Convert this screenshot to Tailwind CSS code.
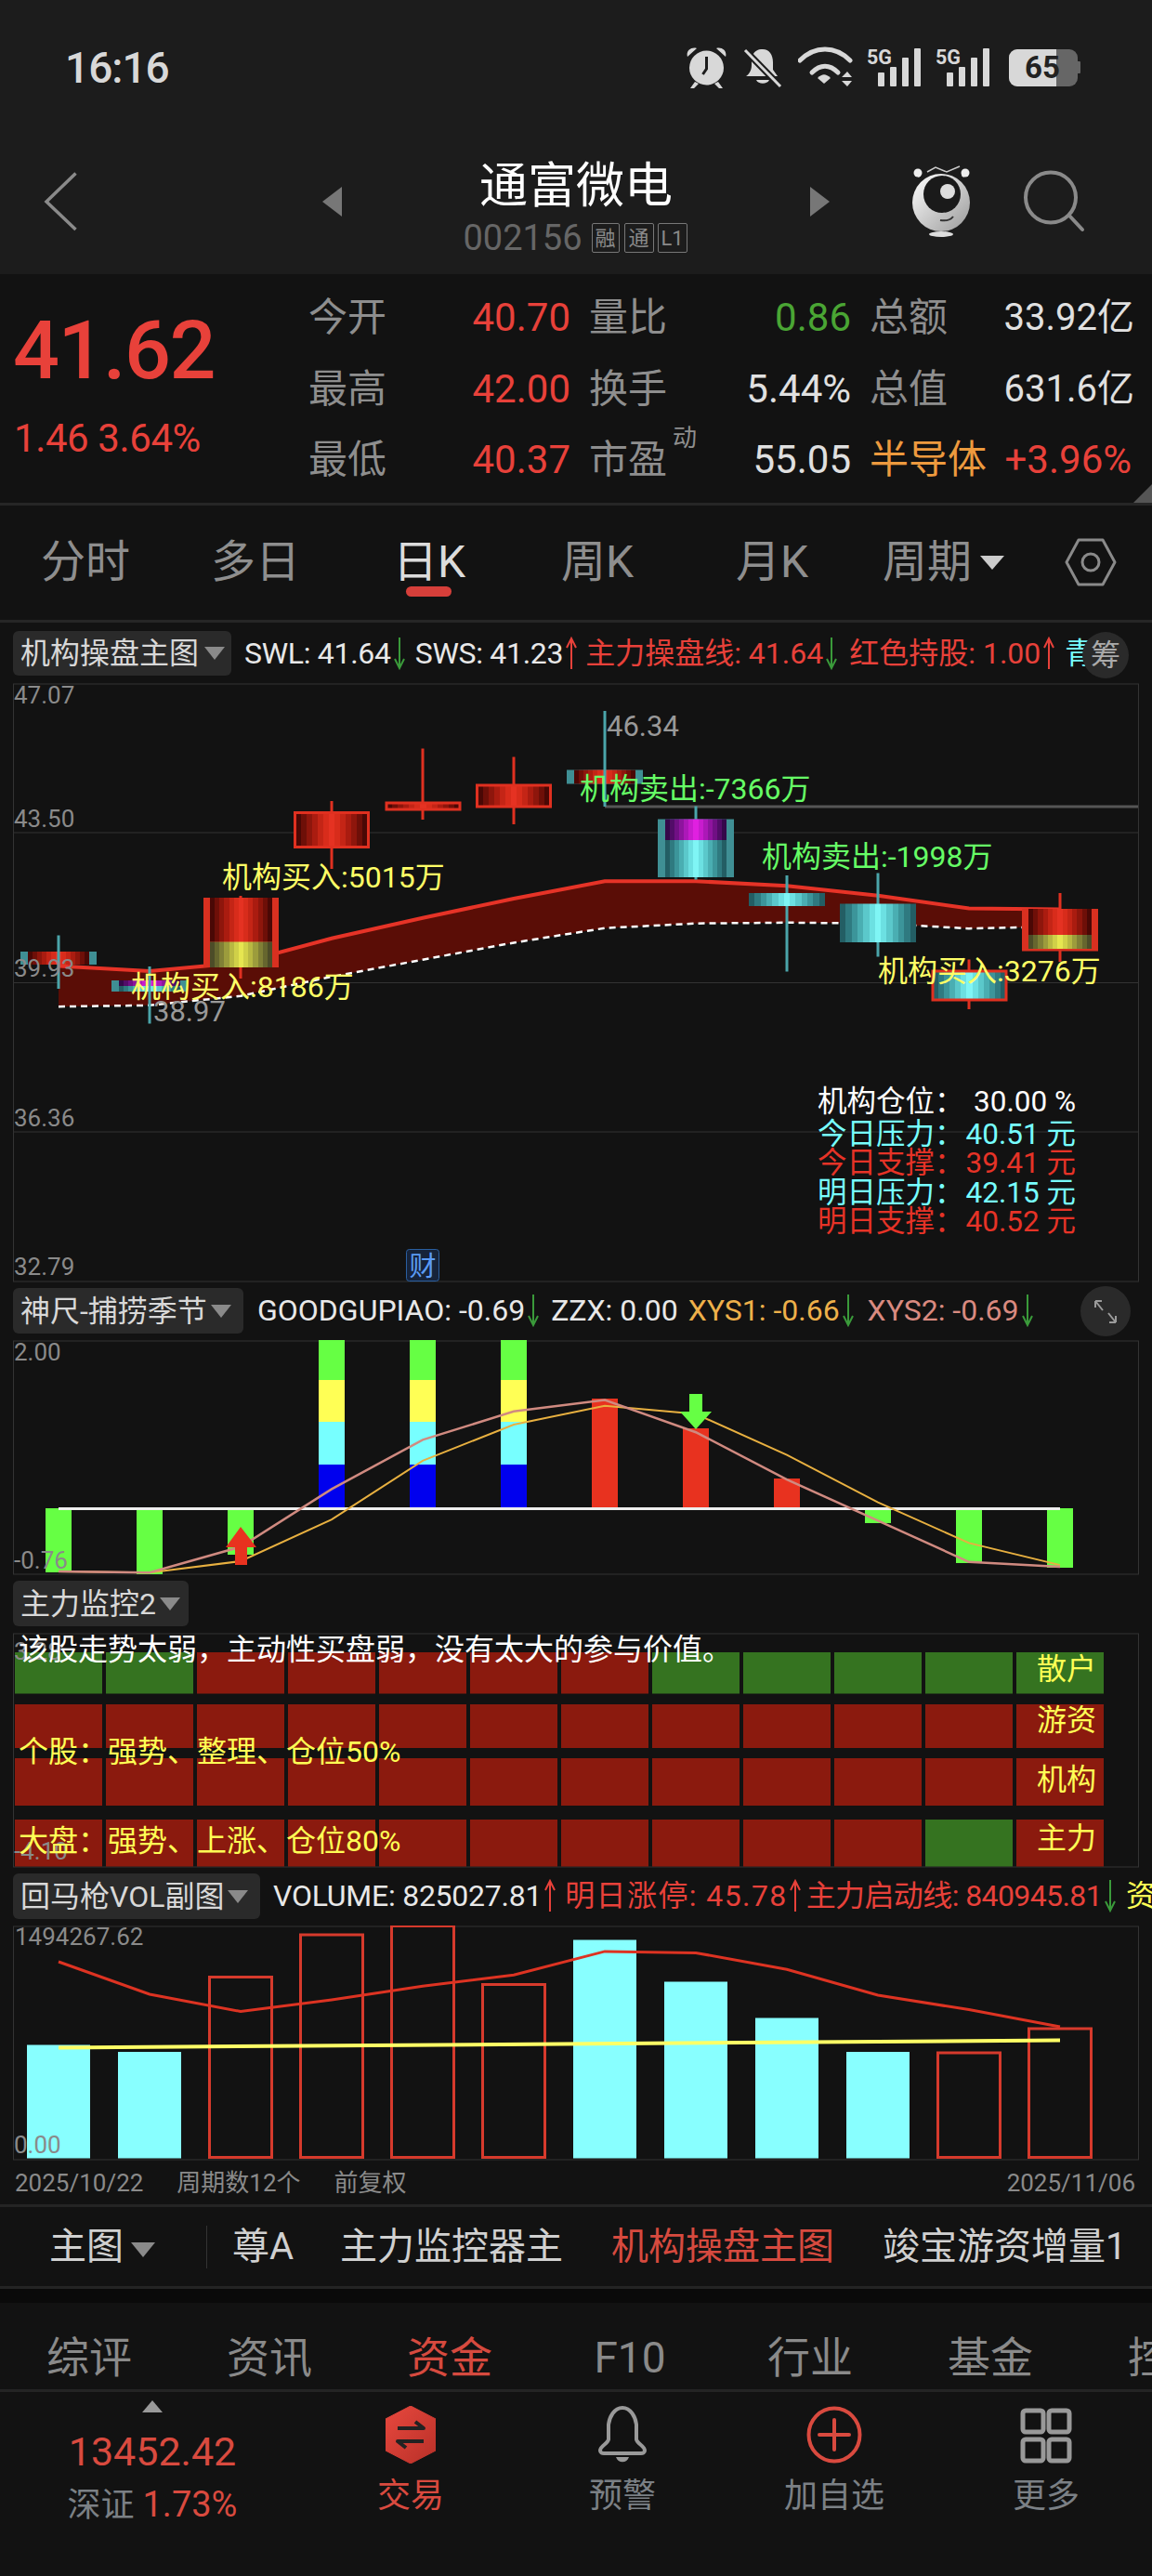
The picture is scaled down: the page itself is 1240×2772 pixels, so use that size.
<!DOCTYPE html>
<html lang="zh-CN">
<head>
    <meta charset="UTF-8">
    <title>通富微电</title>
    <script src="https://cdn.jsdelivr.net/npm/@tailwindcss/browser@4"></script>
</head>
<body class="bg-[#121212] font-['Roboto','Noto_Sans_CJK_SC',sans-serif] antialiased">
<div class="w-[1240px] h-[2772px] overflow-hidden flex flex-col">

    <!-- shared arrows for the legends -->
    <svg class="hidden">
        <symbol id="arrow-up" viewBox="0 0 14 36"><path d="M7 35V2M2 12 7 2l5 10" fill="none" stroke="currentColor" stroke-width="2"/></symbol>
        <symbol id="arrow-down" viewBox="0 0 14 36"><path d="M7 1v33M2 24l5 10 5-10" fill="none" stroke="currentColor" stroke-width="2"/></symbol>
    </svg>

    <!-- Status bar + title -->
    <header class="h-[295px] bg-[#1c1c1c] shrink-0 flex flex-col">
        <div class="h-[146px] flex items-center justify-between pl-[70px] pr-[77px]">
            <span class="text-[46px] font-medium text-[#d8d8d8] tracking-[-1px]">16:16</span>
            <div class="flex items-center">
                <svg class="w-[43px] h-[46px]" viewBox="740 51 43 46" fill="#d8d8d8">
                    <circle cx="761.5" cy="74" r="18.5"/>
                    <path d="M741 62c-2-6 4-11 10-9zM782 62c2-6-4-11-10-9z"/>
                    <path d="M749 89l-5 7h4l5-5zM774 89l5 7h-4l-5-5z"/>
                    <path d="M761.5 62v13l-4 6" fill="none" stroke="#1c1c1c" stroke-width="3"/>
                </svg>
                <svg class="w-[42px] h-[46px] ml-[18px]" viewBox="801 51 42 46" fill="#d8d8d8">
                    <path d="M822 54c7 0 11 6 11 14v8l5 7h-34c3-2 6-6 6-12v-6c0-6 5-11 10-11z"/>
                    <path d="M815 87h14c-2 5-12 5-14 0z"/>
                    <path d="M803 55l37 38" stroke="#1c1c1c" stroke-width="7"/>
                    <path d="M803 55l38 39" stroke="#d8d8d8" stroke-width="3"/>
                </svg>
                <svg class="w-[60px] h-[46px] ml-[17px]" viewBox="860 51 60 46">
                    <path d="M862 66c16-16 38-16 54 0" fill="none" stroke="#d8d8d8" stroke-width="5" stroke-linecap="round"/>
                    <path d="M875 79c9-9 19-9 28 0" fill="none" stroke="#d8d8d8" stroke-width="5" stroke-linecap="round"/>
                    <path d="M888 91l-7-6c5-5 9-5 14 0z" fill="#d8d8d8"/>
                    <path d="M913 78l5 6h-11zM913 94l5-6h-11z" fill="#d8d8d8"/>
                </svg>
                <svg class="w-[57px] h-[46px] ml-[15px]" viewBox="935 51 57 46" fill="#d8d8d8">
                    <text x="934" y="70" font-size="22" font-weight="700" textLength="27" lengthAdjust="spacingAndGlyphs">5G</text>
                    <rect x="946" y="79" width="7" height="15" rx="1"/><rect x="959" y="73" width="7" height="21" rx="1"/><rect x="972" y="63" width="7" height="31" rx="1"/><rect x="985" y="53" width="7" height="41" rx="1"/>
                </svg>
                <svg class="w-[57px] h-[46px] ml-[17px]" viewBox="935 51 57 46" fill="#d8d8d8">
                    <text x="934" y="70" font-size="22" font-weight="700" textLength="27" lengthAdjust="spacingAndGlyphs">5G</text>
                    <rect x="946" y="79" width="7" height="15" rx="1"/><rect x="959" y="73" width="7" height="21" rx="1"/><rect x="972" y="63" width="7" height="31" rx="1"/><rect x="985" y="53" width="7" height="41" rx="1"/>
                </svg>
                <svg class="w-[77px] h-[42px] ml-[21px]" viewBox="1086 54 77 42">
                    <rect x="1086" y="55" width="74" height="40" rx="9" fill="#666"/>
                    <path d="M1095 55h42v40h-42a9 9 0 0 1-9-9V64a9 9 0 0 1 9-9z" fill="#d8d8d8"/>
                    <path d="M1160 68h2a1 1 0 0 1 1 1v11a1 1 0 0 1-1 1h-2z" fill="#666"/>
                    <text x="1122" y="86" font-size="33" font-weight="700" fill="#222" text-anchor="middle">65</text>
                </svg>
            </div>
        </div>
        <div class="relative flex-1">
            <svg class="absolute left-0 top-0 w-[1240px] h-[149px]" viewBox="0 146 1240 149">
                <path d="M81.5 186.5 50 217l31.5 30" fill="none" stroke="#8a8a8a" stroke-width="3.5"/>
                <path d="M368 201v32l-21-16zM872 201v32l21-16z" fill="#777"/>
                <defs><linearGradient id="robot" x1="0" y1="0" x2="1" y2="1"><stop offset="0" stop-color="#fff"/><stop offset="1" stop-color="#9a9a9a"/></linearGradient></defs>
                <path d="M990 190l-3-4M1036 190l3-4" stroke="#ddd" stroke-width="3"/>
                <circle cx="988" cy="186" r="4.5" fill="#eee"/><circle cx="1039" cy="186" r="4.5" fill="#eee"/>
                <path d="M998 185l9-5 12 5 14-6" fill="none" stroke="#ccc" stroke-width="1.5"/>
                <circle cx="1013" cy="218" r="31" fill="url(#robot)"/>
                <circle cx="1014" cy="209" r="20" fill="#1a1a1a"/>
                <circle cx="1020" cy="206" r="8" fill="#ddd"/>
                <path d="M1012 237c6 1 11 0 14-4" fill="none" stroke="#333" stroke-width="2"/>
                <ellipse cx="1013" cy="252" rx="13" ry="3" fill="#ddd"/>
                <circle cx="1131" cy="212.5" r="27" fill="none" stroke="#8a8a8a" stroke-width="4"/>
                <path d="M1151 232l14 15" stroke="#8a8a8a" stroke-width="4" stroke-linecap="round"/>
            </svg>
            <div class="flex flex-col items-center">
                <div class="text-[52px] leading-[60px] mt-[25px] text-white">通富微电</div>
                <div class="flex items-center mt-[7px] ml-[-2px] text-[#666]">
                    <span class="text-[38px] leading-[36px]">002156</span>
                    <span class="ml-[10px] w-[30px] h-[32px] border border-[#777] rounded-[2px] flex items-center justify-center text-[22px] text-[#8a8a8a]">融</span>
                    <span class="ml-[5px] w-[32px] h-[32px] border border-[#777] rounded-[2px] flex items-center justify-center text-[22px] text-[#8a8a8a]">通</span>
                    <span class="ml-[4px] w-[32px] h-[32px] border border-[#777] rounded-[2px] flex items-center justify-center text-[22px] text-[#8a8a8a]">L1</span>
                </div>
            </div>
        </div>
    </header>

    <!-- Quote -->
    <section class="h-[249px] shrink-0 border-b-[3px] border-[#262626] relative flex text-[42px] leading-[50px]">
        <div class="w-[332px] pl-[14px] text-[#e8413a]">
            <div class="text-[88px] leading-[100px] mt-[32px] font-medium tracking-[-1.5px]">41.62</div>
            <div class="text-[42px] leading-[44px] mt-[23px] ml-[1px] tracking-[-0.4px] whitespace-pre">1.46 3.64%</div>
        </div>
        <div class="grid grid-cols-[282px_282px_285px] gap-x-[20px] auto-rows-[76.5px] pt-[9px] text-[#8e8e8e]">
            <div class="flex justify-between items-center"><span>今开</span><span class="text-[#e8413a]">40.70</span></div>
            <div class="flex justify-between items-center"><span>量比</span><span class="text-[#4aa534]">0.86</span></div>
            <div class="flex justify-between items-center"><span>总额</span><span class="text-[#e0e0e0] text-[40px]">33.92亿</span></div>
            <div class="flex justify-between items-center"><span>最高</span><span class="text-[#e8413a]">42.00</span></div>
            <div class="flex justify-between items-center"><span>换手</span><span class="text-[#e0e0e0]">5.44%</span></div>
            <div class="flex justify-between items-center"><span>总值</span><span class="text-[#e0e0e0] text-[40px]">631.6亿</span></div>
            <div class="flex justify-between items-center"><span>最低</span><span class="text-[#e8413a]">40.37</span></div>
            <div class="flex justify-between items-center"><span class="relative">市盈<span class="absolute left-[90px] top-[-14px] text-[26px] leading-[30px]">动</span></span><span class="text-[#e0e0e0]">55.05</span></div>
            <div class="flex justify-between items-center"><span class="text-[#ed9a3e]">半导体</span><span class="text-[#e8413a] pr-[3px]">+3.96%</span></div>
        </div>
        <div class="absolute right-0 bottom-0 w-0 h-0 border-l-[20px] border-l-transparent border-b-[20px] border-b-[#555]"></div>
    </section>

    <!-- Period tabs -->
    <nav class="h-[126px] shrink-0 border-b-[3px] border-[#262626] flex items-center text-[48px] text-[#8e8e8e] pb-[2px]">
        <span class="w-[184px] text-center">分时</span>
        <span class="w-[182px] text-center">多日</span>
        <span class="w-[192px] text-center text-[#dcdcdc] relative">日K<span class="absolute left-[71px] top-[62px] w-[49px] h-[11px] rounded-full bg-[#d63f3a]"></span></span>
        <span class="w-[170px] text-center">周K</span>
        <span class="w-[206px] text-center">月K</span>
        <span class="ml-[16px]">周期</span>
        <span class="ml-[9px] mt-[2px] w-0 h-0 border-l-[13px] border-r-[13px] border-t-[15px] border-l-transparent border-r-transparent border-t-[#ccc]"></span>
        <svg class="w-[56px] h-[52px] ml-[65px]" viewBox="1146 579 56 52" fill="none" stroke="#8a8a8a" stroke-width="3">
            <path d="M1148 605l13-24h26l13 24-13 24h-26z" stroke-linejoin="round"/>
            <circle cx="1174" cy="605" r="9"/>
        </svg>
    </nav>

    <!-- Main chart -->
    <div class="h-[65px] shrink-0 pt-[9px] pl-[14px] relative flex items-start text-[32px] leading-[48px] whitespace-nowrap overflow-hidden">
        <div class="w-[235px] h-[48px] shrink-0 rounded-[6px] bg-[#2a2a2a] text-[#d8d8d8] flex items-center pl-[8px]">机构操盘主图<span class="ml-[6px] w-0 h-0 border-l-[11px] border-r-[11px] border-t-[14px] border-l-transparent border-r-transparent border-t-[#8a8a8a]"></span></div>
        <div class="flex items-center h-[48px] ml-[14px] text-[#e8e8e8] tracking-[-0.3px]">SWL: 41.64<svg class="w-[14px] h-[36px] text-[#3a9a3a] ml-[2px]"><use href="#arrow-down"/></svg></div>
        <div class="flex items-center h-[48px] ml-[10px] text-[#e8e8e8] tracking-[-0.3px]">SWS: 41.23<svg class="w-[14px] h-[36px] text-[#e8413a] ml-[2px]"><use href="#arrow-up"/></svg></div>
        <div class="flex items-center h-[48px] ml-[8px] text-[#e8413a]">主力操盘线: 41.64<svg class="w-[14px] h-[36px] text-[#3a9a3a] ml-[2px]"><use href="#arrow-down"/></svg></div>
        <div class="flex items-center h-[48px] ml-[12px] text-[#e8413a]">红色持股: 1.00<svg class="w-[14px] h-[36px] text-[#e8413a] ml-[2px]"><use href="#arrow-up"/></svg></div>
        <div class="flex items-center h-[48px] ml-[10px] text-[#7ff]">青</div>
        <div class="absolute left-[1165px] top-[10px] w-[50px] h-[50px] rounded-full bg-[#2a2a2a] text-[#aaa] flex items-center justify-center">筹</div>
    </div>
    <svg class="block shrink-0 w-[1240px] h-[647px]" viewBox="0 735 1240 647">
        <defs>
            <linearGradient id="red"></linearGradient>
            <linearGradient id="yel"></linearGradient>
            <linearGradient id="teal"></linearGradient>
            <linearGradient id="pur"></linearGradient>
        </defs>
        <rect x="14.5" y="736" width="1211" height="643" fill="none" stroke="#333"/>
        <path d="M14 896h1211M14 1057.5h1211M14 1218h1211" stroke="#333"/>
        <path d="M651 868h574" stroke="#555" stroke-width="3"/>

        <polygon points="63,1039.6 161,1045 259,1036 357,1009.8 455,987.7 553,967 651,948.2 749,948.2 847,953.3 945,963.8 1043,977.6 1141,978.5 1141,996.9 1043,999.2 945,993.7 847,992.8 749,993.7 651,998.7 553,1014.4 455,1032.7 357,1051 259,1071.7 161,1081.8 63,1083.2" fill="#5a0d06"/>
        <polyline points="63,1039.6 161,1045 259,1036 357,1009.8 455,987.7 553,967 651,948.2 749,948.2 847,953.3 945,963.8 1043,977.6 1141,978.5" fill="none" stroke="#e63327" stroke-width="4"/>
        <polyline points="63,1083.2 161,1081.8 259,1071.7 357,1051 455,1032.7 553,1014.4 651,998.7 749,993.7 847,992.8 945,993.7 1043,999.2 1141,996.9" fill="none" stroke="#fff" stroke-width="2.5" stroke-dasharray="7 5"/>

        <!-- candles -->
        <rect x="22" y="1024" width="82" height="14" fill="#3f8f94"/><rect x="30" y="1024" width="66" height="14" fill="url(#red)"/>
        <path d="M63 1006.5V1064" stroke="#4aa5aa" stroke-width="3"/>
        <rect x="120" y="1055" width="82" height="12" fill="#3f8f94"/><rect x="128" y="1055" width="66" height="6" fill="url(#pur)"/><rect x="128" y="1061" width="66" height="6" fill="url(#teal)"/>
        <path d="M161 1040V1101.5" stroke="#4aa5aa" stroke-width="3"/>
        <path d="M259 964V1053" stroke="#e03020" stroke-width="3"/>
        <rect x="219" y="966" width="81" height="75" fill="#d93020"/><rect x="226" y="966" width="67" height="47.5" fill="url(#red)"/><rect x="226" y="1013.5" width="67" height="27.5" fill="url(#yel)"/>
        <path d="M357 862V935" stroke="#e03020" stroke-width="3"/>
        <rect x="317.5" y="874.5" width="79" height="37" fill="url(#red)" stroke="#e03020" stroke-width="3"/>
        <path d="M455 805.5V882" stroke="#e03020" stroke-width="3"/>
        <rect x="416" y="864" width="79" height="7" fill="url(#red)" stroke="#e03020" stroke-width="3"/>
        <path d="M553 814.5V887" stroke="#e03020" stroke-width="3"/>
        <rect x="513.5" y="845" width="79" height="23" fill="url(#red)" stroke="#e03020" stroke-width="3"/>
        <rect x="610" y="828.5" width="82" height="15" fill="#3f8f94"/><rect x="618" y="828.5" width="66" height="15" fill="url(#red)"/>
        <path d="M651 765V868" stroke="#4aa5aa" stroke-width="3"/>
        <path d="M749 867.5V946.5" stroke="#4aa5aa" stroke-width="3"/>
        <rect x="708" y="881.5" width="82" height="62.5" fill="#3f8f94"/><rect x="716" y="881.5" width="66" height="22.5" fill="url(#pur)"/><rect x="716" y="904" width="66" height="40" fill="url(#teal)"/>
        <path d="M847 942V1045.5" stroke="#4aa5aa" stroke-width="3"/>
        <rect x="806" y="961" width="82" height="14" fill="url(#teal)"/>
        <path d="M945 939.5V1029.5" stroke="#4aa5aa" stroke-width="3"/>
        <rect x="904" y="972.5" width="82" height="41.5" fill="url(#teal)"/>
        <path d="M1043 1032.5V1086" stroke="#e03020" stroke-width="3"/>
        <rect x="1004" y="1045" width="79" height="31" fill="url(#teal)" stroke="#e03020" stroke-width="3"/>
        <path d="M1141 961V1035" stroke="#e03020" stroke-width="3"/>
        <rect x="1100" y="978" width="82" height="45.5" fill="#d93020"/><rect x="1107" y="978" width="68" height="28" fill="url(#red)"/><rect x="1107" y="1006" width="68" height="15" fill="url(#yel)"/>

        <!-- labels -->
        <g fill="#8a8a8a" font-size="26">
            <text x="15" y="757">47.07</text><text x="15" y="889.5">43.50</text><text x="15" y="1051">39.93</text><text x="15" y="1212">36.36</text><text x="15" y="1372">32.79</text>
        </g>
        <g fill="#999" font-size="31">
            <text x="653" y="792">46.34</text><text x="165" y="1099">38.97</text>
        </g>
        <g fill="#ffff66" font-size="32">
            <text x="239" y="955">机构买入:5015万</text><text x="141" y="1073">机构买入:8186万</text><text x="945" y="1056">机构买入:3276万</text>
        </g>
        <g fill="#66ff66" font-size="32">
            <text x="624" y="860">机构卖出:-7366万</text><text x="820" y="933">机构卖出:-1998万</text>
        </g>
        <g font-size="31.5">
            <text x="880" y="1196" fill="#fff">机构仓位：</text><text x="1158" y="1196" fill="#fff" text-anchor="end">30.00 %</text>
            <text x="880" y="1231" fill="#7ff">今日压力：</text><text x="1158" y="1231" fill="#7ff" text-anchor="end">40.51 元</text>
            <text x="880" y="1262" fill="#e63327">今日支撑：</text><text x="1158" y="1262" fill="#e63327" text-anchor="end">39.41 元</text>
            <text x="880" y="1294" fill="#7ff">明日压力：</text><text x="1158" y="1294" fill="#7ff" text-anchor="end">42.15 元</text>
            <text x="880" y="1325" fill="#e63327">明日支撑：</text><text x="1158" y="1325" fill="#e63327" text-anchor="end">40.52 元</text>
        </g>
        <rect x="437.5" y="1344.5" width="35" height="34" rx="3" fill="#16233a" stroke="#2a5fa0"/>
        <text x="455" y="1373" font-size="29" fill="#5b9bf5" text-anchor="middle">财</text>
    </svg>

    <!-- Second chart -->
    <div class="h-[60px] shrink-0 pt-[4px] pl-[14px] relative flex items-start text-[32px] leading-[48px] whitespace-nowrap overflow-hidden">
        <div class="w-[248px] h-[49px] shrink-0 rounded-[6px] bg-[#2a2a2a] text-[#d8d8d8] flex items-center pl-[8px]">神尺-捕捞季节<span class="ml-[4px] w-0 h-0 border-l-[11px] border-r-[11px] border-t-[14px] border-l-transparent border-r-transparent border-t-[#8a8a8a]"></span></div>
        <div class="flex items-center h-[48px] ml-[15px] text-[#e8e8e8]">GOODGUPIAO: -0.69<svg class="w-[14px] h-[36px] text-[#3a9a3a] ml-[2px]"><use href="#arrow-down"/></svg></div>
        <div class="flex items-center h-[48px] ml-[12px] text-[#e8e8e8]">ZZX: 0.00</div>
        <div class="flex items-center h-[48px] ml-[11px] text-[#eeb04a]">XYS1: -0.66<svg class="w-[14px] h-[36px] text-[#3a9a3a] ml-[2px]"><use href="#arrow-down"/></svg></div>
        <div class="flex items-center h-[48px] ml-[14px] text-[#d98a80]">XYS2: -0.69<svg class="w-[14px] h-[36px] text-[#3a9a3a] ml-[2px]"><use href="#arrow-down"/></svg></div>
        <svg class="absolute left-[1162px] top-[0px] w-[56px] h-[58px]" viewBox="0 0 56 58" fill="none" stroke="#9a9a9a" stroke-width="2">
            <circle cx="28" cy="29" r="27" fill="#2a2a2a" stroke="none"/>
            <path d="M17 18l8 10M17 18h7M17 18v7M39 41l-8-10M39 41h-7M39 41v-7"/>
        </svg>
    </div>
    <svg class="block shrink-0 w-[1240px] h-[254px]" viewBox="0 1442 1240 254">
        <rect x="14.5" y="1443" width="1211" height="251" fill="none" stroke="#333"/>
        <g fill="#66ff44">
            <rect x="49" y="1623" width="28" height="69"/><rect x="147" y="1623" width="28" height="71"/><rect x="245" y="1623" width="28" height="50"/>
            <rect x="931" y="1623" width="28" height="16"/><rect x="1029" y="1623" width="28" height="59"/><rect x="1127" y="1623" width="28" height="64"/>
            <rect x="343" y="1441" width="28" height="44"/><rect x="441" y="1441" width="28" height="44"/><rect x="539" y="1441" width="28" height="44"/>
        </g>
        <g fill="#ffff55"><rect x="343" y="1485" width="28" height="45"/><rect x="441" y="1485" width="28" height="45"/><rect x="539" y="1485" width="28" height="45"/></g>
        <g fill="#77ffff"><rect x="343" y="1530" width="28" height="46"/><rect x="441" y="1530" width="28" height="46"/><rect x="539" y="1530" width="28" height="46"/></g>
        <g fill="#0000ee"><rect x="343" y="1576" width="28" height="49"/><rect x="441" y="1576" width="28" height="49"/><rect x="539" y="1576" width="28" height="49"/></g>
        <g fill="#e8321f"><rect x="637" y="1505" width="28" height="119"/><rect x="735" y="1537" width="28" height="87"/><rect x="833" y="1591" width="28" height="33"/></g>
        <path d="M63 1623.5h1078" stroke="#eee" stroke-width="3"/>
        <polyline points="63,1691 161,1692.2 259,1680 357,1635.1 455,1571.8 553,1533 651,1512.7 749,1521.6 847,1565.7 945,1616.7 1043,1660.4 1141,1684.1" fill="none" stroke="#e8b040" stroke-width="2"/>
        <polyline points="63,1691 161,1692.2 259,1664.5 357,1602.4 455,1549.4 553,1518.8 651,1506.5 749,1541.2 847,1592.2 945,1636.3 1043,1680.8 1141,1686.1" fill="none" stroke="#d08a80" stroke-width="2.5"/>
        <path d="M259 1643l17 22h-10v19h-13v-19h-10z" fill="#e8321f"/>
        <path d="M742 1500h14v19h10l-17 19-17-19h10z" fill="#66ff44"/>
        <g fill="#8a8a8a" font-size="26"><text x="15" y="1464">2.00</text><text x="15" y="1688">-0.76</text></g>
    </svg>

    <!-- Monitor heatmap -->
    <div class="h-[61px] shrink-0 pt-[5px] pl-[14px] flex items-start text-[32px] leading-[48px] whitespace-nowrap">
        <div class="w-[189px] h-[49px] shrink-0 rounded-[6px] bg-[#2a2a2a] text-[#d8d8d8] flex items-center pl-[8px]">主力监控2<span class="ml-[4px] w-0 h-0 border-l-[11px] border-r-[11px] border-t-[14px] border-l-transparent border-r-transparent border-t-[#8a8a8a]"></span></div>
    </div>
    <svg class="block shrink-0 w-[1240px] h-[253px]" viewBox="0 1757 1240 253">
        <rect x="14.5" y="1758" width="1211" height="251" fill="none" stroke="#333"/>
        <g id="cells"></g>
        <g fill="#8a8a8a" font-size="26"><text x="15" y="1786">3.28</text><text x="15" y="2001">-4.10</text></g>
        <text x="20" y="1786" font-size="32" fill="#fff">该股走势太弱，主动性买盘弱，没有太大的参与价值。</text>
        <g fill="#ffff55" font-size="32">
            <text x="20" y="1896">个股：强势、整理、仓位50%</text>
            <text x="20" y="1992">大盘：强势、上涨、仓位80%</text>
            <text x="1116" y="1807">散户</text><text x="1116" y="1862">游资</text><text x="1116" y="1926">机构</text><text x="1116" y="1989">主力</text>
        </g>
    </svg>

    <!-- Volume chart -->
    <div class="h-[62px] shrink-0 pt-[6px] pl-[14px] flex items-start text-[32px] leading-[48px] whitespace-nowrap overflow-hidden">
        <div class="w-[266px] h-[49px] shrink-0 rounded-[6px] bg-[#2a2a2a] text-[#d8d8d8] flex items-center pl-[8px]">回马枪VOL副图<span class="ml-[4px] w-0 h-0 border-l-[11px] border-r-[11px] border-t-[14px] border-l-transparent border-r-transparent border-t-[#8a8a8a]"></span></div>
        <div class="flex items-center h-[48px] ml-[14px] text-[#e8e8e8] tracking-[-0.25px]">VOLUME: 825027.81<svg class="w-[14px] h-[36px] text-[#e8413a] ml-[2px]"><use href="#arrow-up"/></svg></div>
        <div class="flex items-center h-[48px] ml-[9px] text-[#e8413a] tracking-[1.4px]">明日涨停: 45.78<svg class="w-[14px] h-[36px] text-[#e8413a] ml-[1px]"><use href="#arrow-up"/></svg></div>
        <div class="flex items-center h-[48px] ml-[5px] text-[#e8413a] tracking-[-0.6px]">主力启动线: 840945.81<svg class="w-[14px] h-[36px] text-[#3a9a3a] ml-[2px]"><use href="#arrow-down"/></svg></div>
        <div class="flex items-center h-[48px] ml-[10px] text-[#ffff55]">资金</div>
    </div>
    <svg class="block shrink-0 w-[1240px] h-[254px]" viewBox="0 2072 1240 254">
        <rect x="14.5" y="2073" width="1211" height="251" fill="none" stroke="#333"/>
        <g fill="#88ffff">
            <rect x="29" y="2200.5" width="68" height="122"/><rect x="127" y="2208" width="68" height="114.5"/><rect x="617" y="2087.5" width="68" height="235"/>
            <rect x="715" y="2132.5" width="68" height="190"/><rect x="813" y="2171.5" width="68" height="151"/><rect x="911" y="2208" width="68" height="114.5"/>
        </g>
        <g fill="none" stroke="#d63a2c" stroke-width="3">
            <rect x="225.5" y="2127.5" width="67" height="194"/><rect x="323.5" y="2082" width="67" height="239.5"/><rect x="421.5" y="2072.5" width="67" height="249"/>
            <rect x="519.5" y="2135.5" width="67" height="186"/><rect x="1009.5" y="2209" width="67" height="112.5"/><rect x="1107.5" y="2183" width="67" height="138.5"/>
        </g>
        <polyline points="63,2111 161,2146 259,2164.5 357,2151.9 455,2137.3 553,2125.2 651,2099.9 749,2101.4 847,2119.3 945,2147 1043,2162.6 1141,2181" fill="none" stroke="#dd3322" stroke-width="3"/>
        <path d="M63 2203.5 1141 2195.5" stroke="#ffff66" stroke-width="4"/>
        <g fill="#8a8a8a" font-size="26"><text x="16" y="2093">1494267.62</text><text x="15" y="2317">0.00</text></g>
    </svg>
    <div class="h-[46px] shrink-0 flex items-center pl-[16px] pr-[18px] text-[26px] text-[#8a8a8a] whitespace-nowrap">
        <span>2025/10/22</span><span class="ml-[36px]">周期数12个</span><span class="ml-[36px]">前复权</span><span class="ml-auto">2025/11/06</span>
    </div>

    <!-- Indicator tabs -->
    <div class="h-[91px] shrink-0 border-y-[3px] border-[#242424] flex items-center text-[40px] text-[#d0d0d0] whitespace-nowrap overflow-hidden">
        <span class="ml-[53px]">主图</span>
        <span class="ml-[8px] mt-[6px] w-0 h-0 border-l-[13px] border-r-[13px] border-t-[16px] border-l-transparent border-r-transparent border-t-[#8a8a8a]"></span>
        <span class="ml-[55px] w-px h-[46px] bg-[#333]"></span>
        <span class="ml-[27px]">尊A</span>
        <span class="ml-[50px]">主力监控器主</span>
        <span class="ml-[52px] text-[#d64a3f]">机构操盘主图</span>
        <span class="ml-[52px]">竣宝游资增量1</span>
    </div>
    <div class="h-[15px] shrink-0 bg-[#0a0a0a]"></div>

    <!-- Section tabs -->
    <nav class="h-[96px] shrink-0 border-b-[3px] border-[#242424] flex items-center pt-[26px] ml-[-1px] text-[46px] text-[#8a8a8a] whitespace-nowrap">
        <span class="w-[194px] shrink-0 text-center">综评</span>
        <span class="w-[194px] shrink-0 text-center">资讯</span>
        <span class="w-[194px] shrink-0 text-center text-[#d64a3f]">资金</span>
        <span class="w-[194px] shrink-0 text-center">F10</span>
        <span class="w-[194px] shrink-0 text-center">行业</span>
        <span class="w-[194px] shrink-0 text-center">基金</span>
        <span class="w-[194px] shrink-0 text-center">控盘</span>
    </nav>

    <!-- Bottom bar -->
    <footer class="flex-1 flex text-[36px] leading-[42px] text-[#7b8085]">
        <div class="w-[328px] flex flex-col items-center pt-[9px]">
            <span class="w-0 h-0 border-l-[11px] border-r-[11px] border-b-[13px] border-l-transparent border-r-transparent border-b-[#999]"></span>
            <span class="text-[43px] leading-[50px] mt-[17px] text-[#d94a3f]">13452.42</span>
            <span class="mt-[11px]">深证 <span class="text-[38px] text-[#d94a3f]">1.73%</span></span>
        </div>
        <div class="w-[228px] flex flex-col items-center pt-[15px] text-[#d94a3f]">
            <svg class="w-[54px] h-[62px]" viewBox="0 0 54 62">
                <defs><linearGradient id="trade" x1="0" y1="0" x2="1" y2="1"><stop offset="0" stop-color="#e8483e"/><stop offset="1" stop-color="#b83028"/></linearGradient></defs>
                <path d="M27 0 54 14v34L27 62 0 48V14z" fill="url(#trade)" stroke="url(#trade)" stroke-width="1" stroke-linejoin="round"/>
                <path d="M13 24h28l-9-7M41 38H13l9 7" fill="none" stroke="#222" stroke-width="4" stroke-linejoin="round"/>
            </svg>
            <span class="mt-[14px]">交易</span>
        </div>
        <div class="w-[228px] flex flex-col items-center pt-[15px]">
            <svg class="w-[54px] h-[62px]" viewBox="0 0 54 62" fill="none" stroke="#999" stroke-width="4">
                <path d="M27 2c-9 0-14 10-15 18v16c-1 5-9 7-9 12 0 2 2 3 4 3h40c2 0 4-1 4-3 0-5-8-7-9-12V20C41 12 36 2 27 2z"/>
                <path d="M20 55h14c-2 7-12 7-14 0z" fill="#999" stroke="none"/>
            </svg>
            <span class="mt-[14px]">预警</span>
        </div>
        <div class="w-[228px] flex flex-col items-center pt-[15px]">
            <svg class="w-[60px] h-[62px]" viewBox="0 0 60 62" fill="none" stroke="#d94a3f">
                <ellipse cx="30" cy="31" rx="27.5" ry="28.5" stroke-width="4"/>
                <path d="M14 31h32M30 15v32" stroke-width="4" stroke-linecap="round"/>
            </svg>
            <span class="mt-[14px]">加自选</span>
        </div>
        <div class="w-[228px] flex flex-col items-center pt-[15px]">
            <svg class="w-[56px] h-[62px]" viewBox="0 0 56 62" fill="none" stroke="#999" stroke-width="5">
                <rect x="3" y="5" width="22" height="23" rx="3"/><rect x="31" y="5" width="22" height="23" rx="3"/>
                <rect x="3" y="36" width="22" height="23" rx="3"/><rect x="31" y="36" width="22" height="23" rx="3"/>
            </svg>
            <span class="mt-[14px]">更多</span>
        </div>
    </footer>
</div>

<script>
    const SVG_NS = 'http://www.w3.org/2000/svg';

    // candle fills are banded, dark at the edges and bright in the middle
    const bands = {
        red: ['#4a0805', '#6e0f08', '#8e160c', '#aa1c10', '#c42516', '#d82c1b', '#e53222'],
        yel: ['#4c4c28', '#66662e', '#808036', '#9c9c3c', '#b8b842', '#d0d048', '#e6e650'],
        teal: ['#235e64', '#2f7a80', '#3c959a', '#4aaeb2', '#5bc8cb', '#6ce0e2', '#7ff5f5'],
        pur: ['#35084a', '#520c68', '#701084', '#8e149e', '#ac18b8', '#c81cce', '#e020e0'],
    };
    Object.entries(bands).forEach(([id, colors]) => {
        const grad = document.getElementById(id);
        const seq = [...colors, ...colors.slice(0, -1).reverse()];
        seq.forEach((c, i) => {
            [i / seq.length, (i + 1) / seq.length].forEach(off => {
                const s = document.createElementNS(SVG_NS, 'stop');
                s.setAttribute('offset', off);
                s.setAttribute('stop-color', c);
                grad.appendChild(s);
            });
        });
    });

    // heatmap cells: g = green, r = red
    const rows = [
        { y: 1778, h: 44.5, c: 'ggrrrrrggggg' },
        { y: 1834, h: 47, c: 'rrrrrrrrrrrr' },
        { y: 1892, h: 51, c: 'rrrrrrrrrrrr' },
        { y: 1958, h: 50.5, c: 'rrrrrrrrrrgr' },
    ];
    const cells = document.getElementById('cells');
    rows.forEach(row => {
        [...row.c].forEach((k, i) => {
            const r = document.createElementNS(SVG_NS, 'rect');
            r.setAttribute('x', 16 + 98 * i);
            r.setAttribute('y', row.y);
            r.setAttribute('width', 94);
            r.setAttribute('height', row.h);
            r.setAttribute('fill', k === 'g' ? '#357320' : '#8b1a0e');
            cells.appendChild(r);
        });
    });
</script>
</body>
</html>
